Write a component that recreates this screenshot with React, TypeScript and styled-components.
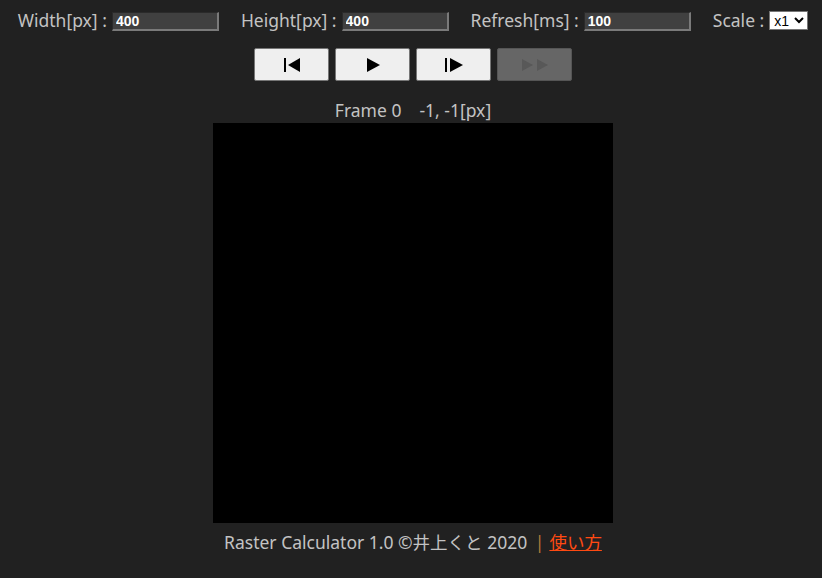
import React from "react";
import styled, { createGlobalStyle } from "styled-components";

const Global = createGlobalStyle`
  html, body { background: #212121; }
  body {
    margin: 8px;
    font-family: "Noto Sans", "Noto Sans CJK JP", sans-serif;
    color: #c3c3c3;
  }
`;

const Page = styled.div`
  padding-left: 4px;
  display: flex;
  flex-direction: column;
  align-items: center;
`;

const TopBar = styled.div`
  display: flex;
  align-items: center;
  justify-content: center;
  gap: 22px;
  height: 20px;
  margin-top: 2px;
`;

const Field = styled.label`
  display: flex;
  align-items: center;
  gap: 5px;
  font-size: 17.5px;
  white-space: nowrap;
`;

const NumInput = styled.input`
  box-sizing: border-box;
  width: 107px;
  height: 19px;
  margin-top: 2px;
  background: #404040;
  color: #ffffff;
  font-family: "Liberation Sans", Arial, sans-serif;
  font-weight: bold;
  font-size: 14px;
  padding: 0 3px;
  border-top: 1px solid #2a2a2a;
  border-left: 1px solid #2a2a2a;
  border-right: 2px solid #7a7a7a;
  border-bottom: 2px solid #7a7a7a;
  outline: none;
`;

const Select = styled.select`
  box-sizing: border-box;
  height: 19px;
  width: 39px;
  font-family: "Liberation Sans", Arial, sans-serif;
  font-size: 14px;
  background: #ffffff;
  color: #000;
  border: 1px solid #767676;
  border-radius: 0;
  padding: 0;
`;

const Controls = styled.div`
  display: flex;
  gap: 6px;
  margin-top: 18px;
`;

const CtrlButton = styled.button<{ $disabled?: boolean }>`
  box-sizing: border-box;
  width: 75px;
  height: 33px;
  border-radius: 2px;
  border: 1px solid ${(p) => (p.$disabled ? "#555" : "#767676")};
  background: ${(p) => (p.$disabled ? "#666666" : "#efefef")};
  color: ${(p) => (p.$disabled ? "#585858" : "#000")};
  display: flex;
  align-items: center;
  justify-content: center;
  padding: 0;
`;

const Status = styled.div`
  margin-top: 17px;
  font-size: 17.5px;
  line-height: 24px;
  white-space: pre;
  display: flex;
  gap: 18px;
`;

const Canvas = styled.div`
  width: 400px;
  height: 400px;
  background: #000;
  margin-top: 1px;
`;

const Footer = styled.div`
  margin-top: 7px;
  font-size: 17.5px;
  line-height: 24px;
  white-space: pre;
`;

const Sep = styled.span`
  color: #b07a3a;
  margin: 0 5px 0 3px;
`;

const Link = styled.a`
  color: #ff4a12;
  text-decoration: underline;
`;

const FirstIcon = () => (
  <svg width="20" height="14" viewBox="0 0 20 14">
    <rect x="2" y="0" width="2" height="14" fill="currentColor" />
    <polygon points="18,0 18,14 6,7" fill="currentColor" />
  </svg>
);
const PlayIcon = () => (
  <svg width="14" height="14" viewBox="0 0 14 14">
    <polygon points="1,0 1,14 14,7" fill="currentColor" />
  </svg>
);
const StepIcon = () => (
  <svg width="20" height="14" viewBox="0 0 20 14">
    <rect x="1" y="0" width="2" height="14" fill="currentColor" />
    <polygon points="6,0 6,14 19,7" fill="currentColor" />
  </svg>
);
const FastIcon = () => (
  <svg width="28" height="14" viewBox="0 0 28 14">
    <polygon points="1,1 1,13 12,7" fill="currentColor" />
    <polygon points="16,1 16,13 27,7" fill="currentColor" />
  </svg>
);

export default function App() {
  return (
    <>
      <Global />
      <Page>
        <TopBar>
          <Field>
            Width[px] : <NumInput defaultValue="400" />
          </Field>
          <Field>
            Height[px] : <NumInput defaultValue="400" />
          </Field>
          <Field>
            Refresh[ms] : <NumInput defaultValue="100" />
          </Field>
          <Field>
            Scale :
            <Select defaultValue="1">
              <option value="1">x1</option>
              <option value="2">x2</option>
            </Select>
          </Field>
        </TopBar>
        <Controls>
          <CtrlButton><FirstIcon /></CtrlButton>
          <CtrlButton><PlayIcon /></CtrlButton>
          <CtrlButton><StepIcon /></CtrlButton>
          <CtrlButton $disabled disabled><FastIcon /></CtrlButton>
        </Controls>
        <Status>
          <span>Frame 0</span>
          <span>-1, -1[px]</span>
        </Status>
        <Canvas />
        <Footer>
          {"Raster Calculator 1.0 ©井上くと 2020 "}
          <Sep>|</Sep>
          <Link href="#">使い方</Link>
        </Footer>
      </Page>
    </>
  );
}
